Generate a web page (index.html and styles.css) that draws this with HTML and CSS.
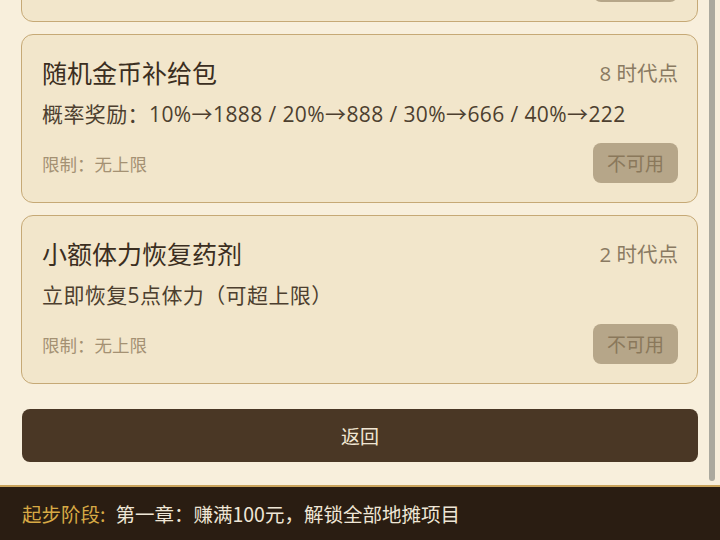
FILE: index.html
```html
<!DOCTYPE html>
<html lang="zh-CN">
<head>
    <meta charset="UTF-8">
    <meta name="viewport" content="width=device-width, initial-scale=1.0">
    <title>时代商店</title>
    <link rel="stylesheet" href="styles.css">
</head>
<body>
    <div class="app">
        <div class="shop">
            <div class="shop-list">
                <!-- 上方被滚出的商品 -->
                <div class="item">
                    <div class="item-head">
                        <span class="item-name">体力恢复药剂</span>
                        <span class="item-cost">5 时代点</span>
                    </div>
                    <div class="item-desc">立即恢复20点体力</div>
                    <div class="item-foot">
                        <span class="item-limit">限制：无上限</span>
                        <button class="buy-button" disabled>不可用</button>
                    </div>
                </div>

                <div class="item">
                    <div class="item-head">
                        <span class="item-name">随机金币补给包</span>
                        <span class="item-cost">8 时代点</span>
                    </div>
                    <div class="item-desc">概率奖励：10%→1888 / 20%→888 / 30%→666 / 40%→222</div>
                    <div class="item-foot">
                        <span class="item-limit">限制：无上限</span>
                        <button class="buy-button" disabled>不可用</button>
                    </div>
                </div>

                <div class="item">
                    <div class="item-head">
                        <span class="item-name">小额体力恢复药剂</span>
                        <span class="item-cost">2 时代点</span>
                    </div>
                    <div class="item-desc">立即恢复5点体力（可超上限）</div>
                    <div class="item-foot">
                        <span class="item-limit">限制：无上限</span>
                        <button class="buy-button" disabled>不可用</button>
                    </div>
                </div>

                <button class="back-button">返回</button>
            </div>
            <div class="scroll-thumb"></div>
        </div>

        <div class="stage-bar">
            <span class="stage-label">起步阶段:</span>
            <span class="stage-text">第一章：赚满100元，解锁全部地摊项目</span>
        </div>
    </div>
</body>
</html>
```

FILE: styles.css
```css
body {
    margin: 0;
    padding: 0;
    font-family: "Open Sans", "Noto Sans CJK SC", sans-serif;
    background-color: #f8efdc;
}
.app {
    width: 720px;
    height: 540px;
    display: flex;
    flex-direction: column;
    overflow: hidden;
}
.shop {
    position: relative;
    flex: 1;
    overflow: hidden;
    display: flex;
    flex-direction: column;
    justify-content: flex-end;
}
.shop-list {
    display: flex;
    flex-direction: column;
    gap: 12px;
    padding: 0 22px 23px 21px;
}
.item {
    background-color: #f2e6cb;
    border: 1.5px solid #c6a976;
    border-radius: 12px;
    padding: 22px 19px 19px 20px;
}
.item-head {
    display: flex;
    justify-content: space-between;
    align-items: center;
    height: 30px;
}
.item-name {
    font-size: 25px;
    color: #3b2e21;
}
.item-cost {
    font-size: 20.5px;
    color: #8a7a62;
}
.item-desc {
    margin-top: 13px;
    font-size: 21px;
    letter-spacing: 0.4px;
    line-height: 28px;
    color: #4d3f2f;
}
.item-foot {
    margin-top: 15px;
    display: flex;
    justify-content: space-between;
    align-items: center;
}
.item-limit {
    font-size: 17.5px;
    color: #a49173;
}
.buy-button {
    height: 40px;
    padding: 0 14px;
    border: none;
    border-radius: 8px;
    background-color: #b6a689;
    color: #8a785b;
    font-family: inherit;
    font-size: 19px;
}
.back-button {
    margin-top: 13px;
    height: 53px;
    margin-left: 1px;
    border: none;
    border-radius: 8px;
    background-color: #4a3725;
    color: #f1e6d3;
    font-family: inherit;
    font-size: 19px;
}
.scroll-thumb {
    position: absolute;
    top: -20px;
    right: 5px;
    bottom: 4px;
    width: 6px;
    border-radius: 3px;
    background-color: #aba99e;
}
.stage-bar {
    height: 53px;
    border-top: 2px solid #c9a35b;
    background-color: #2a1d12;
    display: flex;
    align-items: center;
    padding-left: 22px;
    font-family: "Noto Sans CJK SC", sans-serif;
    font-size: 19.5px;
}
.stage-label {
    color: #d8aa45;
    margin-right: 10px;
}
.stage-text {
    color: #efe6d6;
}
```
